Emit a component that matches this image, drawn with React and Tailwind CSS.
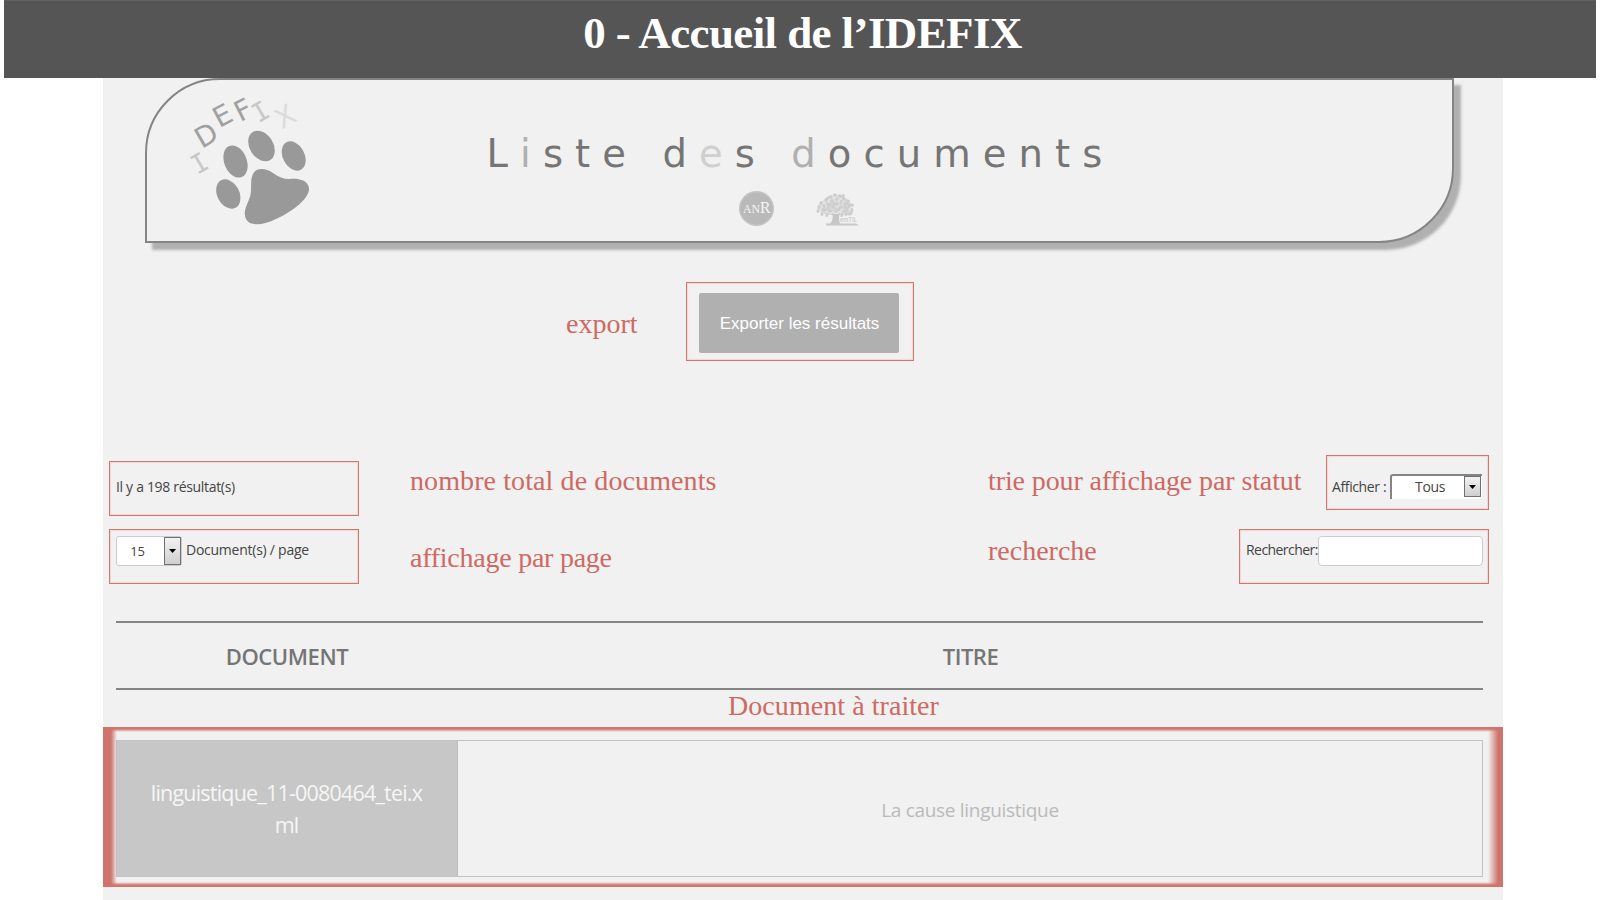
const note = "font-['Liberation_Serif'] text-[28px] leading-[28px] text-[#cd6a63] whitespace-nowrap";
const frame = "border border-[#d27770] shadow-[inset_0_0_1px_1px_#f0d8d6]";

function Paw() {
  return (
    <svg className="h-[150px] w-[130px]" viewBox="180 90 130 150">
      <g fill="#999">
        <path d="M253 174C256 167 266 168 273 173C279 177 283 179 289 179C298 178 308 180 309 188C310 199 290 213 276 219C264 225 250 227 246 219C242 211 249 202 250.500 195C252 186 250 180 253 174Z" />
        <ellipse cx="235.5" cy="161.500" rx="11.200" ry="16.700" transform="rotate(-22 235.5 161.500)" />
        <ellipse cx="261.500" cy="146" rx="11.800" ry="16.500" transform="rotate(-32 261.500 146)" />
        <ellipse cx="293.700" cy="156" rx="10.800" ry="15.500" transform="rotate(-28 293.700 156)" />
        <ellipse cx="228.300" cy="194" rx="11" ry="15.500" transform="rotate(-28 228.300 194)" />
      </g>
      <g fontFamily="DejaVu Sans" textAnchor="middle" fontSize="28">
        <text transform="translate(204 171) rotate(-30)" fill="#c8c8c8" fontFamily="DejaVu Sans Mono" fontSize="26">I</text>
        <text transform="translate(211 143.500) rotate(-30)" fill="#a0a0a0">D</text>
        <text transform="translate(227 124) rotate(-28)" fill="#a0a0a0">E</text>
        <text transform="translate(247.500 118.500) rotate(-27)" fill="#a0a0a0">F</text>
        <text transform="translate(265 119.500) rotate(-30)" fill="#c8c8c8" fontFamily="DejaVu Sans Mono" fontSize="26">I</text>
        <text transform="translate(290 125) rotate(-30)" fill="#dcdcdc">X</text>
      </g>
    </svg>
  );
}

function AnrLogo() {
  return (
    <svg className="size-9" viewBox="0 0 36 36">
      <circle cx="17.500" cy="17.500" r="17.500" fill="#c4c4c4" />
      <circle cx="17.500" cy="17.500" r="16" fill="#b9b9b9" />
      <g fontFamily="Liberation Serif" fill="#f6f6f6">
        <text x="4" y="22" fontSize="12.500" textLength="17" lengthAdjust="spacingAndGlyphs">AN</text>
        <text x="21" y="22" fontSize="17" textLength="10.500" lengthAdjust="spacingAndGlyphs">R</text>
      </g>
    </svg>
  );
}

const leaves = [
  [3, 14], [2, 18], [5, 10], [6, 21], [9, 17], [8, 13], [10, 7], [12, 11], [11, 22], [14, 18],
  [15, 4], [16, 8], [17, 14], [19, 2], [21, 6], [21, 11], [20, 17], [24, 3], [25, 9], [25, 14],
  [28, 6], [29, 11], [28, 18], [32, 8], [33, 13], [31, 16], [36, 12], [36, 17], [33, 21], [26, 22],
  [7, 17], [12, 15], [14, 12], [18, 11], [23, 16], [29, 14], [32, 11], [35, 20], [30, 21], [12, 5], [27, 3],
];

function TreeLogo() {
  return (
    <svg className="h-[33px] w-[44px] overflow-visible" viewBox="0 0 44 33">
      <path d="M2 18Q4 6 14 4Q22 0 29 4Q36 8 37 19Q28 23 20 20Q10 23 2 18Z" fill="#e2e2e2" />
      <g fill="#cdcdcd">
        {leaves.map(([x, y]) => (
          <ellipse key={`${x}-${y}`} cx={x} cy={y} rx="2.100" ry="1.500" transform={`rotate(${(x * 37 + y * 11) % 180} ${x} ${y})`} />
        ))}
      </g>
      <path d="M20 8V20M20 20L11 13M20 20L28 12M19 22L8 20M21 22L33 18M15 15L15 9M25 15L25 8" fill="none" stroke="#d0d0d0" strokeWidth="1" />
      <path d="M16 20Q20 22 24 20Q22 25 24 31L14 31Q18 26 16 20Z" fill="#c6c6c6" />
      <path d="M10 30.500H40L43 32.500H10Z" fill="#c8c8c8" />
      <text x="24" y="29" fontFamily="Liberation Sans" fontSize="8" fill="#c2c2c2" textLength="17" lengthAdjust="spacingAndGlyphs">emTIL</text>
    </svg>
  );
}

function ArrowButton({ className }) {
  return (
    <span className={`flex shrink-0 items-center justify-center border border-[#707070] bg-linear-to-b from-[#f2f2f2] to-[#cfcfcf] ${className}`}>
      <svg className="h-1 w-[7px]" viewBox="0 0 7 4">
        <path d="M0 0H7L3.500 4Z" fill="#000" />
      </svg>
    </span>
  );
}

export default function App() {
  return (
    <div className="h-[900px] w-[1600px] overflow-hidden bg-white font-['Open_Sans',sans-serif] text-[#444]">
      <header className="mx-1 flex h-[78px] justify-center border-t border-[#606060] bg-[#555]">
        <h1 className="mt-[7px] ml-[5px] whitespace-nowrap font-['Liberation_Serif'] text-[45px] leading-[50px] font-bold tracking-[-0.6px] text-white">0 - Accueil de l’IDEFIX</h1>
      </header>

      <main className="ml-[103px] flex h-[822px] w-[1400px] flex-col bg-[#f1f1f1]">
        <section className="ml-[42px] grid h-[165px] w-[1309px] shrink-0 grid-cols-[130px_1fr_130px] rounded-tl-[75px] rounded-br-[75px] border-2 border-[#848484] bg-[#f1f1f1] px-[33px] pt-[10px] shadow-[7px_7px_3px_#b0b0b0]">
          <Paw />
          <div className="flex flex-col items-center">
            <h2 className="mt-[41px] ml-[2px] whitespace-nowrap font-['DejaVu_Sans'] text-[38.5px] leading-[46px] tracking-[12.1px] text-[#757575]">
              L<span className="text-[#b0b0b0]">i</span>ste d<span className="text-[#cfcfcf]">e</span>s <span className="text-[#b0b0b0]">d</span>ocuments
            </h2>
            <div className="mt-[14px] flex items-center gap-[41px]">
              <AnrLogo />
              <TreeLogo />
            </div>
          </div>
        </section>

        <section className="mt-[39px] flex h-[79px] shrink-0 items-start pl-[463px]">
          <p className={`${note} mt-[28px] w-[120px]`}>export</p>
          <div className={`${frame} h-[79px] w-[228px] px-3 pt-[10px]`}>
            <button className="h-[60px] w-[200px] rounded-[2px] bg-[#b0b0b0] pt-[2px] pl-px font-['Liberation_Sans'] text-[17px] text-white">Exporter les résultats</button>
          </div>
        </section>

        <section className="mt-[94px] grid h-[61px] shrink-0 grid-cols-[250px_577px_390px_163px] items-start pl-[6px]">
          <div className={`${frame} mt-[6px] h-[55px] pt-[15px] pl-[6px] text-[14px] leading-5 tracking-[-0.32px]`}>Il y a 198 résultat(s)</div>
          <p className={`${note} mt-3 pl-[51px] tracking-[0.1px]`}>nombre total de documents</p>
          <p className={`${note} mt-3 pl-[52px] tracking-[-0.11px]`}>trie pour affichage par statut</p>
          <div className={`${frame} flex h-[55px] pl-[5px] text-[14px] leading-5 tracking-[-0.38px]`}>
            <label className="mt-[21px] w-[58px] whitespace-nowrap">Afficher :</label>
            <div className="mt-[18px] flex h-[25px] w-[92px] rounded-tl-[3px] border-t-2 border-l-2 border-[#848484] bg-white">
              <span className="flex-1 pt-px pl-1 text-center">Tous</span>
              <ArrowButton className="mr-px h-[21px] w-[17px]" />
            </div>
          </div>
        </section>

        <section className="mt-[13px] grid h-[55px] shrink-0 grid-cols-[250px_577px_303px_250px] items-start pl-[6px]">
          <div className={`${frame} flex h-[55px] pt-[6px] pl-[6px] text-[14px] leading-5 tracking-[-0.25px]`}>
            <div className="flex h-[30px] w-[66px] rounded-[3px] border border-[#ccc] bg-white">
              <span className="flex-1 pt-[4px] pr-[6px] text-center text-[13px]">15</span>
              <ArrowButton className="h-[28px] w-[17px]" />
            </div>
            <span className="mt-[4px] ml-[4px] whitespace-nowrap">Document(s) / page</span>
          </div>
          <p className={`${note} mt-[15px] pl-[51px] tracking-[-0.25px]`}>affichage par page</p>
          <p className={`${note} mt-[8px] pl-[52px]`}>recherche</p>
          <div className={`${frame} flex h-[55px] pt-[6px] pl-[6px] text-[14px] leading-5 tracking-[-0.56px]`}>
            <label className="mt-[4px] w-[72px] whitespace-nowrap">Rechercher:</label>
            <input className="h-[30px] w-[165px] rounded-[4px] border border-[#ccc] bg-white" />
          </div>
        </section>

        <div className="mx-[13px] mt-[37px] grid h-[69px] w-[1367px] shrink-0 grid-cols-[342px_1fr] border-y-2 border-[#848484] pt-px text-center text-[22px] leading-[65px] font-semibold text-[#757575]">
          <div className="tracking-[-0.45px]">DOCUMENT</div>
          <div className="tracking-[-0.5px]">TITRE</div>
        </div>

        <div className="h-[37px] shrink-0 pl-[625px]">
          <p className={`${note} mt-[2px] tracking-[0.06px]`}>Document à traiter</p>
        </div>

        <div className="h-[160px] shrink-0 bg-[linear-gradient(to_right,#cf746d_8px,transparent_14px),linear-gradient(to_left,#cf746d_5px,transparent_15px),linear-gradient(to_bottom,#d27770_2px,transparent_5px),linear-gradient(to_top,#d27770_2px,transparent_5px)] px-[13px] pt-[13px]">
          <div className="grid h-[137px] w-[1367px] grid-cols-[341px_1fr] border border-[#c2c2c2] bg-[#f1f1f1]">
            <div className="border-r border-[#bdbdbd] bg-[#c7c7c7] pt-[36px] pr-px text-center text-[21.5px] leading-8 whitespace-nowrap tracking-[-0.8px] text-[#f6f6f6]">
              linguistique_11-0080464_tei.x
              <br />
              ml
            </div>
            <div className="pt-[53px] text-center text-[19px] leading-8 tracking-[-0.3px] text-[#bababa]">La cause linguistique</div>
          </div>
        </div>
      </main>
    </div>
  );
}
